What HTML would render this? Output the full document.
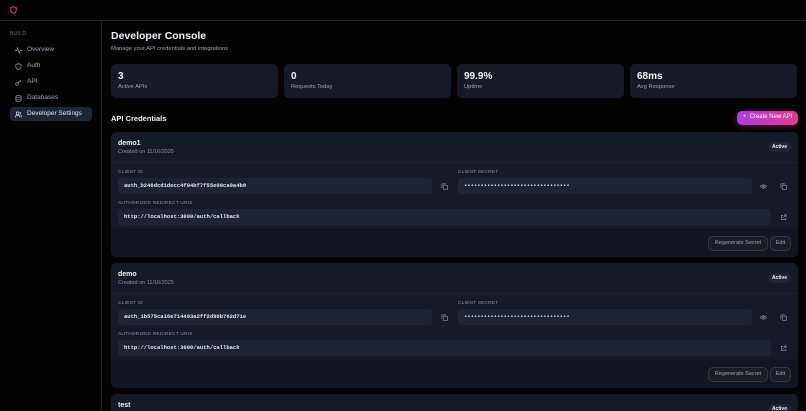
<!DOCTYPE html><html><head><meta charset="utf-8"><style>
*{box-sizing:border-box;margin:0;padding:0}
html{width:806px;height:411px;overflow:hidden;background:#030303}
body{width:806px;height:411px;overflow:hidden;background:#030303;font-family:"Liberation Sans",sans-serif;color:#e5e7eb;position:relative;line-height:1.2}
.top{position:absolute;left:0;top:0;width:806px;height:21px;border-bottom:1px solid #1f2229}
.side{position:absolute;left:0;top:21px;width:102px;height:390px;border-right:1px solid #1f2229}
.side .lbl{position:absolute;left:10px;top:10px;font-size:5px;color:#6b7280;letter-spacing:.3px}
.nav{position:absolute;left:10px;width:82px;height:14px;font-size:6.5px;color:#9ca3af;display:flex;align-items:center;padding-left:5px;gap:5px;border-radius:4px}
.nav.on{background:#1e2533;color:#e5e7eb}
.nav svg{width:7px;height:7px}
h1{position:absolute;left:111px;top:30px;font-size:10.5px;font-weight:700;color:#f3f4f6}
.sub{position:absolute;left:111px;top:46px;font-size:5.8px;color:#9ca3af}
.stat{position:absolute;top:64px;width:167px;height:34px;background:#141a26;border-radius:5px;padding:7px 7px}
.stat b{display:block;font-size:10px;line-height:12px;color:#f3f4f6}
.stat span{display:block;font-size:5.8px;line-height:8px;color:#9ca3af}
h2{position:absolute;left:111px;top:114px;font-size:7.5px;font-weight:700;color:#f3f4f6}
.btn{position:absolute;left:737px;top:111px;width:61px;height:14px;border-radius:5px;background:linear-gradient(90deg,#a73ee6,#e23a8a);font-size:6px;color:#fff;display:flex;align-items:center;justify-content:center;box-shadow:0 2px 6px rgba(200,50,160,.4)}
.card{position:absolute;left:111px;width:687px;height:125px;background:#141a26;border-radius:5px;overflow:hidden}
.card .hd{height:31px;border-bottom:1px solid #1b2230;padding:7px 7px}
.card .hd b{font-size:7px;line-height:9px;color:#f3f4f6;display:block}
.card .hd span{display:block;font-size:5.5px;line-height:8px;color:#8b93a1}
.badge{position:absolute;right:7px;top:10px;font-size:5px;font-weight:700;padding:2px 4px;border-radius:6px;background:#1e2533;color:#f3f4f6}
.fl{position:absolute;font-size:4.8px;color:#8b93a1;letter-spacing:.2px}
.in{position:absolute;height:16px;background:#1c2433;border-radius:3px;font-family:"Liberation Mono",monospace;font-size:5.5px;color:#e5e7eb;padding:5px 6px;font-weight:700}
.ic{position:absolute;width:7px;height:7px}
.ft{position:absolute;left:0;top:96px;width:687px;height:29px;background:#111722}
.gb{position:absolute;top:104px;height:15px;border:1px solid #333842;border-radius:5px;font-size:5.5px;color:#9ca3af;display:flex;align-items:center;justify-content:center;background:#181d26}
</style></head><body>
<div class="top"><svg style="position:absolute;left:10px;top:6px" width="7" height="8" viewBox="0 0 7 8"><path d="M3.5 .7L6.2 1.7V4C6.2 5.7 5 6.8 3.5 7.3 2 6.8.8 5.7.8 4V1.7Z" fill="none" stroke="#e0446f" stroke-width="1"/></svg></div>
<div class="side"><div class="lbl">BUILD</div>
<div class="nav" style="top:22px"><svg viewBox="0 0 8 8"><path d="M0 4h2l1-3 2 6 1-3h2" fill="none" stroke="#9ca3af" stroke-width=".8"/></svg>Overview</div>
<div class="nav" style="top:38px"><svg viewBox="0 0 8 8"><path d="M4 .7L7 1.8V4C7 5.8 5.7 7 4 7.4 2.3 7 1 5.8 1 4V1.8Z" fill="none" stroke="#9ca3af" stroke-width=".8"/></svg>Auth</div>
<div class="nav" style="top:54px"><svg viewBox="0 0 8 8"><circle cx="2.3" cy="5.7" r="1.5" fill="none" stroke="#9ca3af" stroke-width=".8"/><path d="M3.4 4.6L7 1M5.5 2.5l1 1" stroke="#9ca3af" stroke-width=".8"/></svg>API</div>
<div class="nav" style="top:70px"><svg viewBox="0 0 8 8"><rect x="1" y=".8" width="6" height="6.4" rx="1.5" fill="none" stroke="#9ca3af" stroke-width=".8"/><path d="M1 3h6M1 5h6" stroke="#9ca3af" stroke-width=".6"/></svg>Databases</div>
<div class="nav on" style="top:86px"><svg viewBox="0 0 8 8"><circle cx="3" cy="2.5" r="1.5" fill="none" stroke="#e5e7eb" stroke-width=".8"/><path d="M.5 7.3c0-1.8 1-2.6 2.5-2.6s2.5.8 2.5 2.6M5.5 1.2a1.4 1.4 0 010 2.6M6.5 4.8c.8.4 1.2 1.2 1.2 2.5" fill="none" stroke="#e5e7eb" stroke-width=".8"/></svg>Developer Settings</div>
</div>
<h1>Developer Console</h1>
<div class="sub">Manage your API credentials and integrations</div>
<div class="stat" style="left:111px"><b>3</b><span>Active APIs</span></div>
<div class="stat" style="left:284px"><b>0</b><span>Requests Today</span></div>
<div class="stat" style="left:457px"><b>99.9%</b><span>Uptime</span></div>
<div class="stat" style="left:630px"><b>68ms</b><span>Avg Response</span></div>
<h2>API Credentials</h2>
<div class="btn">+&nbsp;&nbsp;Create New API</div>

<div class="card" style="top:132px">
<div class="hd"><b>demo1</b><span>Created on 11/16/2025</span></div><div class="badge">Active</div>
<div class="fl" style="left:7px;top:38px">CLIENT ID</div>
<div class="in" style="left:7px;top:46px;width:314px">auth_b246dcd1decc4f04bf7f55e00ca9a4b8</div>
<svg class="ic" style="left:330px;top:51px" viewBox="0 0 8 8"><rect x="2.5" y="2.5" width="5" height="5" rx="1" fill="none" stroke="#8b93a1" stroke-width=".8"/><path d="M1 5.5V1.5a.5.5 0 01.5-.5h4" fill="none" stroke="#8b93a1" stroke-width=".8"/></svg>
<div class="fl" style="left:347px;top:38px">CLIENT SECRET</div>
<div class="in" style="left:347px;top:46px;width:294px">••••••••••••••••••••••••••••••••</div>
<svg class="ic" style="left:649px;top:51px" viewBox="0 0 8 8"><path d="M.5 4C2 1.5 6 1.5 7.5 4 6 6.5 2 6.5.5 4Z" fill="none" stroke="#8b93a1" stroke-width=".8"/><circle cx="4" cy="4" r="1.1" fill="#8b93a1"/></svg>
<svg class="ic" style="left:669px;top:51px" viewBox="0 0 8 8"><rect x="2.5" y="2.5" width="5" height="5" rx="1" fill="none" stroke="#8b93a1" stroke-width=".8"/><path d="M1 5.5V1.5a.5.5 0 01.5-.5h4" fill="none" stroke="#8b93a1" stroke-width=".8"/></svg>
<div class="fl" style="left:7px;top:69px">AUTHORIZED REDIRECT URIS</div>
<div class="in" style="left:7px;top:77px;width:653px">http://localhost:3000/auth/callback</div>
<svg class="ic" style="left:669px;top:82px" viewBox="0 0 8 8"><path d="M3.5 1.5H1.5v5h5v-2M4.5 1h2.5v2.5M7 1L3.5 4.5" fill="none" stroke="#8b93a1" stroke-width=".8"/></svg>
<div class="ft"></div>
<div class="gb" style="left:597px;width:60px">Regenerate Secret</div>
<div class="gb" style="left:659px;width:21px">Edit</div>
</div>

<div class="card" style="top:263px">
<div class="hd"><b>demo</b><span>Created on 11/16/2025</span></div><div class="badge">Active</div>
<div class="fl" style="left:7px;top:38px">CLIENT ID</div>
<div class="in" style="left:7px;top:46px;width:314px">auth_1b575ca16e714493a2ff2d90b762d71e</div>
<svg class="ic" style="left:330px;top:51px" viewBox="0 0 8 8"><rect x="2.5" y="2.5" width="5" height="5" rx="1" fill="none" stroke="#8b93a1" stroke-width=".8"/><path d="M1 5.5V1.5a.5.5 0 01.5-.5h4" fill="none" stroke="#8b93a1" stroke-width=".8"/></svg>
<div class="fl" style="left:347px;top:38px">CLIENT SECRET</div>
<div class="in" style="left:347px;top:46px;width:294px">••••••••••••••••••••••••••••••••</div>
<svg class="ic" style="left:649px;top:51px" viewBox="0 0 8 8"><path d="M.5 4C2 1.5 6 1.5 7.5 4 6 6.5 2 6.5.5 4Z" fill="none" stroke="#8b93a1" stroke-width=".8"/><circle cx="4" cy="4" r="1.1" fill="#8b93a1"/></svg>
<svg class="ic" style="left:669px;top:51px" viewBox="0 0 8 8"><rect x="2.5" y="2.5" width="5" height="5" rx="1" fill="none" stroke="#8b93a1" stroke-width=".8"/><path d="M1 5.5V1.5a.5.5 0 01.5-.5h4" fill="none" stroke="#8b93a1" stroke-width=".8"/></svg>
<div class="fl" style="left:7px;top:69px">AUTHORIZED REDIRECT URIS</div>
<div class="in" style="left:7px;top:77px;width:653px">http://localhost:3000/auth/callback</div>
<svg class="ic" style="left:669px;top:82px" viewBox="0 0 8 8"><path d="M3.5 1.5H1.5v5h5v-2M4.5 1h2.5v2.5M7 1L3.5 4.5" fill="none" stroke="#8b93a1" stroke-width=".8"/></svg>
<div class="ft"></div>
<div class="gb" style="left:597px;width:60px">Regenerate Secret</div>
<div class="gb" style="left:659px;width:21px">Edit</div>
</div>

<div class="card" style="top:394px;height:17px;border-radius:5px 5px 0 0">
<div class="hd" style="border:none"><b>test</b></div><div class="badge">Active</div>
</div>
</body></html>
